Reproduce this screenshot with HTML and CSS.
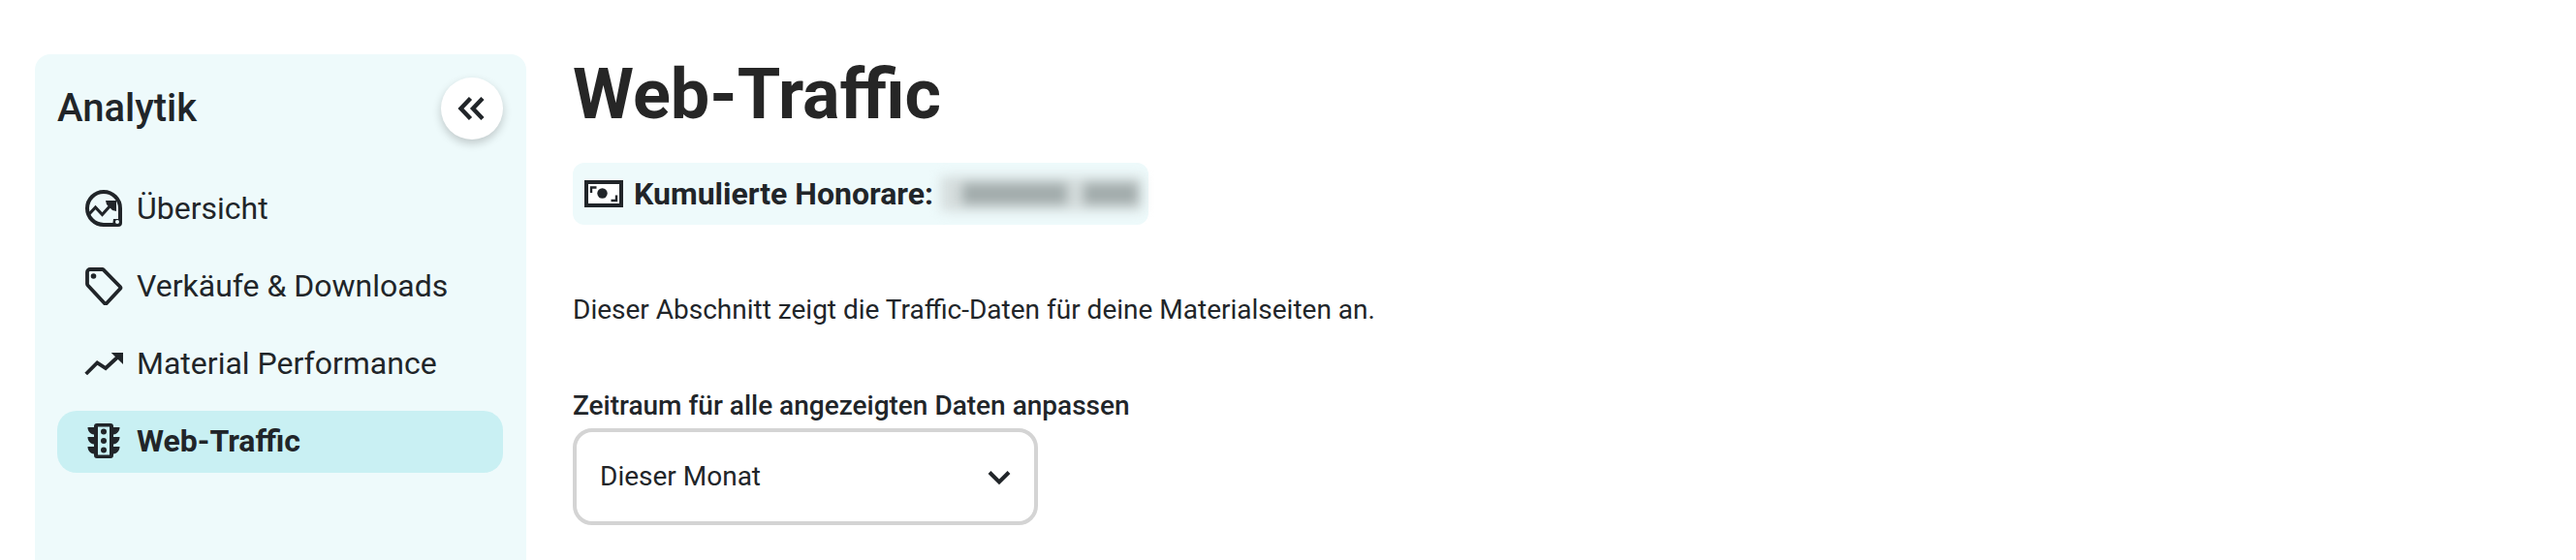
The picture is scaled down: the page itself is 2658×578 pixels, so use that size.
FILE: index.html
```html
<!DOCTYPE html>
<html lang="de">
<head>
<meta charset="utf-8">
<title>Web-Traffic</title>
<link rel="stylesheet" href="styles.css">
</head>
<body>
<div class="page">
  <aside class="sidebar">
    <div class="side-head">
      <h2 class="side-title">Analytik</h2>
      <button class="collapse" aria-label="Einklappen">
        <svg class="chev" viewBox="0 0 30 24" width="30" height="24"><path d="M13.500 1.500 3.500 12l10 10.500M26 1.500 16 12l10 10.500" fill="none" stroke="#212529" stroke-width="4.400"/></svg>
      </button>
    </div>
    <nav class="nav">
      <a class="item">
        <svg class="icon" viewBox="0 0 40 40"><path d="M20 3a17 17 0 1 0 0 34h15a2 2 0 0 0 2-2V20A17 17 0 0 0 20 3Z" fill="none" stroke="#212529" stroke-width="4"/><path d="M30 31h8v7H29Z" fill="#212529"/><circle cx="34" cy="34" r="2" fill="#eefafb"/><path d="m4 27 7.500-8 7 7.500 9-10" fill="none" stroke="#212529" stroke-width="3.200"/><path d="M22 12h11v11l-4-1-6-6Z" fill="#212529"/></svg>
        <span>Übersicht</span>
      </a>
      <a class="item">
        <svg class="icon" viewBox="0 0 40 40"><path d="M3 6a3 3 0 0 1 3-3h12.500a2 2 0 0 1 1.400.6L37 21a1.500 1.500 0 0 1 0 2L23 38a1.500 1.500 0 0 1-2.200 0L3.600 19.500A2 2 0 0 1 3 18Z" fill="none" stroke="#212529" stroke-width="3.800" stroke-linejoin="round"/><circle cx="9.500" cy="10" r="2.800" fill="#212529"/></svg>
        <span>Verkäufe &amp; Downloads</span>
      </a>
      <a class="item">
        <svg class="icon" viewBox="0 0 40 40"><path d="M1.700 31 13.300 19.500 22 25 35 13" fill="none" stroke="#212529" stroke-width="3.800"/><path d="M27.700 9H40V21Z" fill="#212529"/></svg>
        <span>Material Performance</span>
      </a>
      <a class="item active">
        <svg class="icon" viewBox="0 0 40 40"><path d="M13 2h14a3 3 0 0 1 3 3v1h6.500c0 4-2.500 7-6.500 7.500V16h6.500c0 4-2.500 7-6.500 7.500V26h6.500c0 4-2.500 7-6.500 7.500V35a3 3 0 0 1-3 3H13a3 3 0 0 1-3-3v-1.500C6 33 3.500 30 3.500 26H10v-2.500C6 23 3.500 20 3.500 16H10v-2.500C6 13 3.500 10 3.500 6H10V5a3 3 0 0 1 3-3Z" fill="#212529"/><rect x="14" y="5.500" width="12" height="29" fill="#c9f0f3"/><circle cx="20" cy="10.500" r="3" fill="#212529"/><circle cx="20" cy="20" r="3" fill="#212529"/><circle cx="20" cy="29.500" r="3" fill="#212529"/></svg>
        <span>Web-Traffic</span>
      </a>
    </nav>
  </aside>
  <main class="content">
    <h1 class="title">Web-Traffic</h1>
    <div class="earnings">
      <svg class="money" viewBox="0 0 40 28" width="40" height="28"><rect x="2" y="2" width="36" height="24" fill="#fff" stroke="#212529" stroke-width="4"/><path d="M12.500 7.500H7V13M27.500 21H33V15.500" fill="none" stroke="#212529" stroke-width="2.400"/><circle cx="18.500" cy="13.500" r="5.200" fill="#212529"/></svg>
      <strong class="earn-label">Kumulierte Honorare:</strong>
      <span class="blurred"><i class="smudge wide"></i><i class="smudge narrow"></i></span>
    </div>
    <p class="desc">Dieser Abschnitt zeigt die Traffic-Daten für deine Materialseiten an.</p>
    <label class="range-label">Zeitraum für alle angezeigten Daten anpassen</label>
    <div class="select">
      <span>Dieser Monat</span>
      <svg class="caret" viewBox="0 0 24 16" width="24" height="16"><path d="M2 2.500 12 12.500 22 2.500" fill="none" stroke="#212529" stroke-width="4"/></svg>
    </div>
  </main>
</div>
</body>
</html>
```
FILE: styles.css
```css
* { box-sizing: border-box; }
html, body { margin: 0; padding: 0; height: 100%; overflow: hidden; background: #fff; }
body { font-family: Roboto, "Liberation Sans", sans-serif; color: #212529; }
.page { display: flex; align-items: stretch; padding: 56px 0 0 36px; height: 100%; }
.sidebar { width: 507px; flex: none; background: #eefafb; border-radius: 16px 16px 0 0; padding: 24px 24px 0 23px; }
.side-head { display: flex; justify-content: space-between; align-items: center; height: 64px; }
.side-title { margin: 0; font-size: 40px; font-weight: 500; line-height: 64px; }
.collapse { width: 64px; height: 64px; border: 0; padding: 0; border-radius: 50%; background: #fff; box-shadow: 0 4px 10px rgba(0,0,0,.2); display: flex; align-items: center; justify-content: center; }
.nav { display: flex; flex-direction: column; gap: 16px; margin-top: 40px; }
.item { display: flex; align-items: center; gap: 14px; height: 64px; padding: 0 0 3px 28px; font-size: 32px; border-radius: 20px; }
.icon { width: 40px; height: 40px; flex: none; }
.item.active { background: #c9f0f3; font-weight: 700; }
.content { margin-left: 48px; }
.title { margin: 0 0 28px; font-size: 72px; font-weight: 700; line-height: 84px; color: #262626; }
.earnings { display: flex; align-items: center; height: 64px; width: 594px; padding-left: 12px; background: #eefafb; border-radius: 12px; }
.money { flex: none; }
.earn-label { margin-left: 11px; font-size: 32px; font-weight: 700; white-space: nowrap; }
.blurred { display: flex; gap: 17px; margin-left: 8px; align-items: center; height: 36px; width: 208px; background: #d5dddd; filter: blur(6px); padding-left: 22px; }
.smudge { display: block; height: 22px; background: #a2acac; }
.smudge.wide { width: 108px; }
.smudge.narrow { width: 56px; }
.desc { margin: 68px 0 0; font-size: 28px; line-height: 40px; white-space: nowrap; }
.range-label { display: block; margin-top: 62px; font-size: 28px; font-weight: 500; line-height: 34px; }
.select { display: flex; align-items: center; justify-content: space-between; margin-top: 6px; width: 480px; height: 100px; border: 4px solid #d4d4d4; border-radius: 20px; padding: 0 24px 1px 24px; font-size: 28px; background: #fff; }
.caret { margin-top: 3px; }
```
